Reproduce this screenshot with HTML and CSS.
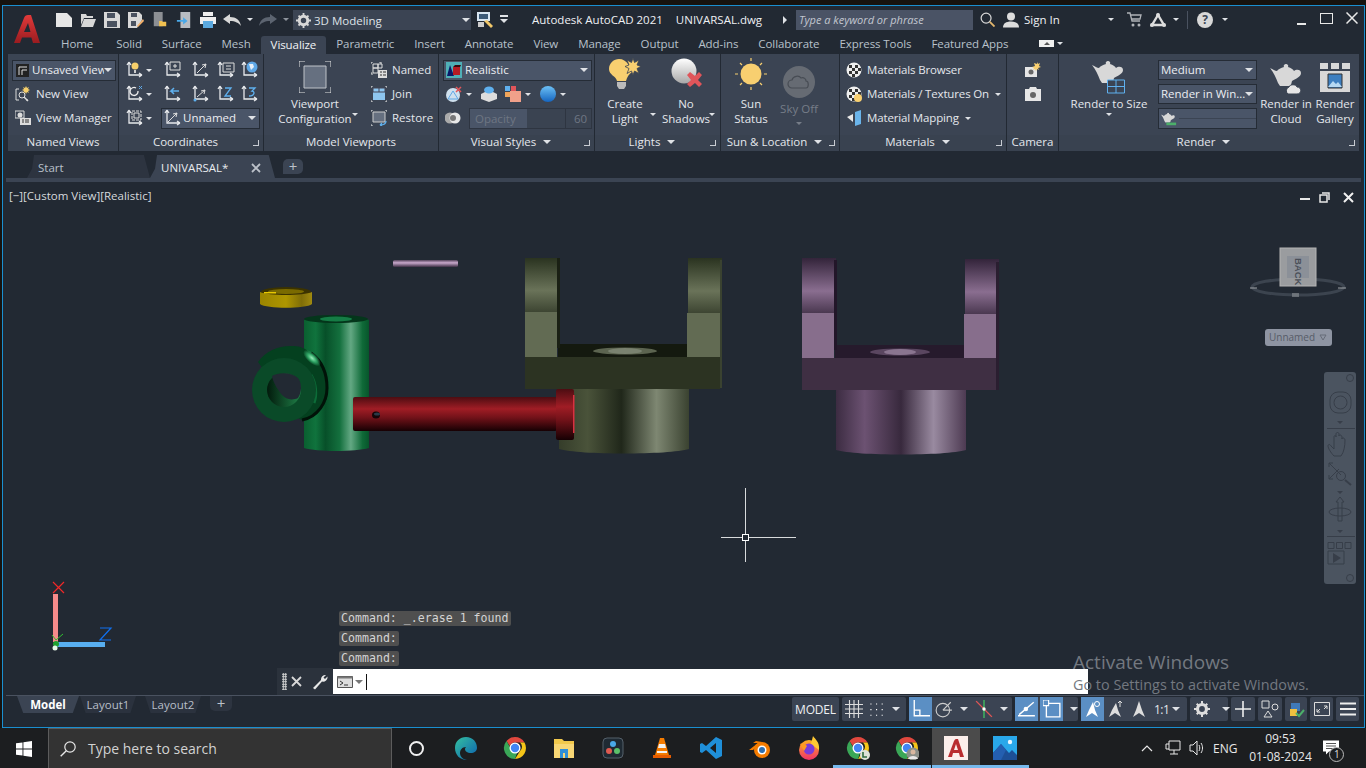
FILE: index.html
```html
<!DOCTYPE html>
<html lang="en">
<head>
<meta charset="utf-8">
<title>Autodesk AutoCAD 2021 - UNIVARSAL.dwg</title>
<link rel="stylesheet" href="styles.css">
</head>
<body>
<svg class="defs" width="0" height="0" aria-hidden="true">
  <defs>
    <symbol id="axis" viewBox="0 0 18 18"><path d="M3 1v13h13M3 1 1 4M3 1l2 3M16 14l-3-2M16 14l-3 2" fill="none" stroke="#e8eaed" stroke-width="1.3"/></symbol>
    <symbol id="mat" viewBox="0 0 16 16"><circle cx="8" cy="8" r="7.5" fill="#eee"/><path d="M3 3h3v3H3zM9 3h3v3H9zM6 6h3v3H6zM12 6h3v3h-3zM3 9h3v3H3zM9 9h3v3H9zM6 12h3v3H6z" fill="#333"/></symbol>
    <symbol id="teapot" viewBox="0 0 32 24"><path d="M0 4c3 1 5 3 7 3 1-2 4-3 7-4-1-2 1-3 2-3s3 1 2 3c3 1 5 2 6 4 2-2 7-2 7 2 0 4-6 6-9 8l-1 4-2 1H10l-2-3C6 14 4 9 0 4z" fill="#d8d8d8"/></symbol>
    <linearGradient id="gGreen"><stop offset="0" stop-color="#0a5f30"/><stop offset=".18" stop-color="#10733d"/><stop offset=".33" stop-color="#075029"/><stop offset=".55" stop-color="#14703e"/><stop offset=".72" stop-color="#63a883"/><stop offset=".9" stop-color="#0f6a38"/><stop offset="1" stop-color="#07552b"/></linearGradient>
    <linearGradient id="gRed" x2="0" y2="1"><stop offset="0" stop-color="#4d0d12"/><stop offset=".35" stop-color="#a01d25"/><stop offset=".6" stop-color="#731219"/><stop offset="1" stop-color="#160003"/></linearGradient>
    <linearGradient id="gOl"><stop offset="0" stop-color="#353d2a"/><stop offset=".22" stop-color="#4a533a"/><stop offset=".48" stop-color="#20271a"/><stop offset=".75" stop-color="#7e8772"/><stop offset="1" stop-color="#3a4230"/></linearGradient>
    <linearGradient id="gOlE" x2="0" y2="1"><stop offset="0" stop-color="#2a3320"/><stop offset=".6" stop-color="#6a7359"/><stop offset="1" stop-color="#3d4532"/></linearGradient>
    <linearGradient id="gPu"><stop offset="0" stop-color="#3c2c42"/><stop offset=".22" stop-color="#6c5272"/><stop offset=".5" stop-color="#38293d"/><stop offset=".75" stop-color="#998aa0"/><stop offset="1" stop-color="#4d3a52"/></linearGradient>
    <linearGradient id="gPuE" x2="0" y2="1"><stop offset="0" stop-color="#33243a"/><stop offset=".6" stop-color="#8a6e90"/><stop offset="1" stop-color="#4a3850"/></linearGradient>
    <linearGradient id="gPin" x2="0" y2="1"><stop offset="0" stop-color="#54425a"/><stop offset=".4" stop-color="#c8a8cc"/><stop offset="1" stop-color="#3d2e44"/></linearGradient>
    <linearGradient id="gGold"><stop offset="0" stop-color="#9a8400"/><stop offset=".5" stop-color="#ae9600"/><stop offset=".8" stop-color="#7f6d08"/><stop offset="1" stop-color="#a08a10"/></linearGradient>
    <radialGradient id="gShine"><stop offset="0" stop-color="#9aeebb"/><stop offset=".5" stop-color="#2fa565"/><stop offset="1" stop-color="#2fa565" stop-opacity="0"/></radialGradient>
    <linearGradient id="gHole"><stop offset="0" stop-color="#021a0c"/><stop offset="1" stop-color="#1f8048"/></linearGradient>
    <linearGradient id="gLogo" x2="0" y2="1"><stop offset="0" stop-color="#e23a3a"/><stop offset="1" stop-color="#9a1c20"/></linearGradient>
    <linearGradient id="gBall" x2="0" y2="1"><stop offset="0" stop-color="#fff"/><stop offset="1" stop-color="#a8a8a8"/></linearGradient>
    <linearGradient id="gSphere" x2="0" y2="1"><stop offset="0" stop-color="#6cc0f5"/><stop offset="1" stop-color="#1565c0"/></linearGradient>
    <linearGradient id="gEdge" x2="1" y2="1"><stop offset="0" stop-color="#35c1a0"/><stop offset="1" stop-color="#0b5fb0"/></linearGradient>
    <linearGradient id="gFox" x2="0" y2="1"><stop offset="0" stop-color="#ffb020"/><stop offset="1" stop-color="#f0306a"/></linearGradient>
  </defs>
</svg>
<div class="wall"></div>
<main class="window">
  <header class="head">
    <div class="logo-col">
      <svg class="logo" viewBox="0 0 26 29"><path d="M0 28 10 3q1-3 4-3h3l9 28h-7l-1.600-5.500H8L6 28zM10 17h6.500L14 8z" fill="url(#gLogo)" fill-rule="evenodd"/></svg>
    </div>
    <div class="head-main">
      <div class="titlebar">
        <span class="qb"><svg class="i16" viewBox="0 0 16 14"><path d="M0 0h11l5 5v9H0z" fill="#e6e6e6"/></svg></span>
        <span class="qb"><svg class="i16" viewBox="0 0 16 14"><path d="M1 1h5l1 2h6v2H4L1 12zM4 6h12l-3 8H1z" fill="#d8d8d8"/></svg></span>
        <span class="qb"><svg class="i16" viewBox="0 0 16 16"><path d="M0 0h13l3 3v13H0z" fill="#d8d8d8"/><path d="M3 1h8v5H3zM3 9h10v6H3z" fill="#4a5260"/></svg></span>
        <span class="qb"><svg class="i16" viewBox="0 0 16 16"><path d="M0 0h11l3 3v5l-5 8H0z" fill="#d8d8d8"/><path d="M3 1h6v4H3zM3 9h5v5H3z" fill="#4a5260"/><path d="m9 14 6-7 1 2-6 6z" fill="#f6b26b"/></svg></span>
        <span class="qb"><svg class="i16" viewBox="0 0 16 18"><path d="M1 0h10v16H1z" fill="#8c8f94"/><path d="M7 10h3l1 1h4v5H7z" fill="#f0c050"/></svg></span>
        <span class="qb"><svg class="i16" viewBox="0 0 16 18"><path d="M4 0h11v18H4z" fill="#b8bcc2"/><path d="M0 9h7V6l5 4-5 4v-3H0z" fill="#49a8e8"/></svg></span>
        <span class="qb"><svg class="i16" viewBox="0 0 16 16"><path d="M3 0h10v4H3zM0 5h16v7H0z" fill="#eee"/><path d="M3 9h10v7H3z" fill="#5ba9df"/></svg></span>
        <span class="qb"><svg class="i18" viewBox="0 0 18 12"><path d="M0 5 7 0v3c6 0 10 3 11 9-2-3-6-5-11-5v3z" fill="#d8d8d8"/></svg></span>
        <span class="car car-q"></span>
        <span class="qb"><svg class="i18" viewBox="0 0 18 12"><path d="M18 5 11 0v3C5 3 1 6 0 12c2-3 6-5 11-5v3z" fill="#5c6470"/></svg></span>
        <span class="car car-q dim"></span>
        <div class="workspace">
          <svg class="i15" viewBox="0 0 16 16"><circle cx="8" cy="8" r="4.500" fill="none" stroke="#d8d8d8" stroke-width="3.200"/><path d="M7 0h2v3H7zM7 13h2v3H7zM0 7h3v2H0zM13 7h3v2h-3zM2 3.400 3.400 2l2 2L4 5.400zM10.600 12 12 10.600l2 2-1.400 1.400zM12.600 2 14 3.400l-2 2L10.600 4zM4 10.600 5.400 12l-2 2L2 12.600z" fill="#d8d8d8"/></svg>
          <span class="ws-t">3D Modeling</span>
          <span class="car ws-c"></span>
        </div>
        <span class="qa"><svg class="i16" viewBox="0 0 16 16"><path d="M0 0h13v9H0z" fill="#d8e6f2"/><path d="M2 2h9v5H2z" fill="#3b5a78"/><path d="M1 10h6v5H1z" fill="#ccc"/><path d="m7 9 3-1 6 6-2 2z" fill="#f2c86a"/></svg></span>
        <span class="car ws-bar"></span>
        <div class="doc-title"><span>Autodesk AutoCAD 2021</span><span class="dwg">UNIVARSAL.dwg</span></div>
        <span class="tri-r"></span>
        <div class="search">Type a keyword or phrase</div>
        <svg class="i15 mag" viewBox="0 0 16 16"><circle cx="6.500" cy="6.500" r="5.300" fill="none" stroke="#d8d8d8" stroke-width="1.300"/><path d="m10.500 10.500 5 5" stroke="#e3b76d" stroke-width="2"/></svg>
        <svg class="i16 person" viewBox="0 0 16 15"><circle cx="8" cy="4" r="4" fill="#ddd"/><path d="M0 15c0-4 3-6 8-6s8 2 8 6z" fill="#ddd"/></svg>
        <span class="signin">Sign In</span>
        <span class="car car-si"></span>
        <svg class="i15 cart" viewBox="0 0 15 15"><path d="M0 1h3l2 8h8M4 3h10l-1 4H5" fill="none" stroke="#b0b3b8" stroke-width="1.300"/><circle cx="6" cy="13" r="1.500" fill="#b0b3b8"/><circle cx="12" cy="13" r="1.500" fill="#b0b3b8"/></svg>
        <svg class="i16 a360" viewBox="0 0 16 14"><path d="M8 2 2 12h12z" fill="none" stroke="#ddd" stroke-width="2.400"/><circle cx="8" cy="2" r="2" fill="#ddd"/><circle cx="2" cy="12" r="2" fill="#ddd"/><circle cx="14" cy="12" r="2" fill="#ddd"/></svg>
        <span class="car car-a"></span>
        <span class="sep"></span>
        <span class="help">?</span>
        <span class="car car-h"></span>
        <span class="wmin"></span>
        <span class="wmax"></span>
        <svg class="wclose" viewBox="0 0 12 12"><path d="m.5.500 11 11M11.500.500l-11 11" stroke="#e8e8e8" stroke-width="1.500"/></svg>
      </div>
      <nav class="tabs">
        <span class="tab tab-home">Home</span><span class="tab">Solid</span><span class="tab">Surface</span><span class="tab">Mesh</span><span class="tab active">Visualize</span><span class="tab">Parametric</span><span class="tab">Insert</span><span class="tab">Annotate</span><span class="tab">View</span><span class="tab">Manage</span><span class="tab">Output</span><span class="tab">Add-ins</span><span class="tab">Collaborate</span><span class="tab">Express Tools</span><span class="tab tab-last">Featured Apps</span>
        <span class="min-tog"><span class="tri-u"></span></span><span class="car car-t"></span>
      </nav>
    </div>
  </header>

  <section class="ribbon">
    <div class="panel p-named">
      <div class="pb col pad-l4">
        <div class="row"><div class="dd dd-unsaved"><svg class="i13" viewBox="0 0 13 13"><path d="M0 0h13v13H0z" fill="#222"/><path d="M3 11V3h8M6 11V6h5" fill="none" stroke="#ddd"/></svg><span class="clip">Unsaved View</span><span class="car car-abs"></span></div></div>
        <div class="row li"><svg class="i16" viewBox="0 0 16 16"><path d="M1 3v11h3M1 3h3M13 14h-2" fill="none" stroke="#ddd"/><circle cx="7" cy="9" r="3" fill="none" stroke="#ddd"/><path d="m9 11 4 4" stroke="#ddd" stroke-width="1.500"/><path d="m11 0 1 2 2-1-1 2 2 1-2 1 1 2-2-1-1 2-1-2-2 1 1-2-2-1 2-1-1-2 2 1z" fill="#f6cf6b"/></svg><span>New View</span></div>
        <div class="row li"><svg class="i16" viewBox="0 0 16 16"><path d="M0 1h9v7H0z" fill="none" stroke="#ddd"/><circle cx="5" cy="5" r="2.500" fill="#ddd"/><path d="M5 8h11v7H5z" fill="#ddd"/><path d="M7 10h2M10 10h4M7 12h2M10 12h4" stroke="#333"/></svg><span>View Manager</span></div>
      </div>
      <div class="pt">Named Views</div>
    </div>

    <div class="panel p-coord">
      <div class="pb col coord">
        <div class="row crow">
          <span class="cb"><svg class="i18" viewBox="0 0 18 18"><use href="#axis"/><circle cx="9" cy="5" r="3.500" fill="#f6cf6b"/><path d="M8 9h2v3H8z" fill="#ccc"/></svg></span><span class="car cc"></span>
          <svg class="i18 c1" viewBox="0 0 18 18"><use href="#axis"/><path d="M6 1h10v8H6z" fill="#3b4453" stroke="#ddd"/><path d="M9 5h4M11 3v4" stroke="#ddd"/></svg>
          <svg class="i18 c2" viewBox="0 0 18 18"><use href="#axis"/><path d="m5 12 9-9M14 3l-4 1M14 3l-1 4" stroke="#ddd" fill="none"/></svg>
          <svg class="i18 c3" viewBox="0 0 18 18"><use href="#axis"/><path d="M6 2h11v9H6z" fill="#3b4453" stroke="#ddd"/><path d="M9 5h5M9 8h5" stroke="#ddd"/></svg>
          <svg class="i18 c4" viewBox="0 0 18 18"><use href="#axis"/><circle cx="11" cy="6" r="5.500" fill="#5fa8e6"/><path d="M8 3h4l1 3-3 3z" fill="#e8f0f8"/></svg>
        </div>
        <div class="row crow">
          <span class="cb"><svg class="i18" viewBox="0 0 18 18"><use href="#axis"/><path d="M12 6a4 4 0 1 1-2-3" fill="none" stroke="#eee" stroke-width="1.300"/><path d="m13 1 3 3M16 1l-3 3" stroke="#5fa8e6"/></svg></span><span class="car cc"></span>
          <svg class="i18 c1" viewBox="0 0 18 18"><use href="#axis"/><path d="M15 6H7l3-3M7 6l3 3" fill="none" stroke="#5fb0ee" stroke-width="1.500"/></svg>
          <svg class="i18 c2" viewBox="0 0 18 18"><use href="#axis"/><path d="m5 12 8-7M13 5l-4 1M13 5l-1 4" stroke="#ddd" fill="none"/><circle cx="3" cy="15" r="1.500" fill="#5fb0ee"/></svg>
          <svg class="i18 c3" viewBox="0 0 18 18"><use href="#axis"/><path d="M8 3h6L8 11h6" fill="none" stroke="#5fb0ee" stroke-width="1.300"/></svg>
          <svg class="i18 c4" viewBox="0 0 18 18"><use href="#axis"/><path d="M8 3h6l-3 3c3 0 3 5-3 5" fill="none" stroke="#5fb0ee" stroke-width="1.300"/></svg>
        </div>
        <div class="row crow">
          <span class="cb"><svg class="i18" viewBox="0 0 18 18"><use href="#axis"/><path d="M6 2h9v9H6z" fill="none" stroke="#ddd" stroke-dasharray="3 1"/><path d="M8 4h5v5H8z" fill="none" stroke="#ddd"/></svg></span><span class="car cc"></span>
          <div class="dd dd-unnamed"><svg class="i18" viewBox="0 0 18 18"><use href="#axis"/><path d="m4 13 9-9M13 4l-4 1M13 4l-1 4" stroke="#ddd" fill="none"/></svg><span>Unnamed</span><span class="car car-abs"></span></div>
        </div>
      </div>
      <div class="pt">Coordinates<span class="corner"></span></div>
    </div>

    <div class="panel p-vp">
      <div class="pb">
        <div class="big w102">
          <div class="bigi"><svg class="vp-ic" viewBox="0 0 32 32"><path d="M5 5h22v22H5z" fill="#667080" stroke="#bfc3c9"/><path d="M0 6V0h6M26 0h6v6M32 26v6h-6M6 32H0v-6" fill="none" stroke="#e6e6e6"/></svg></div>
          <div class="bigt">Viewport<br>Configuration<span class="car car-big cfg"></span></div>
        </div>
        <div class="col pad-l5">
          <div class="row li"><svg class="i16" viewBox="0 0 16 16"><path d="M0 2V0h2M8 0h2v2M0 10v2h2" fill="none" stroke="#ddd"/><path d="M2 2h5v4H2zM7 2h4v4H7zM2 6h5v5H2z" fill="none" stroke="#ddd"/><path d="M7 8h9v8H7z" fill="#ddd"/><path d="M9 10h2M12 10h3M9 13h2M12 13h3" stroke="#333"/></svg><span>Named</span></div>
          <div class="row li"><svg class="i16" viewBox="0 0 16 16"><path d="M0 2V0h2M14 0h2v2M16 14v2h-2M2 16H0v-2" fill="none" stroke="#ddd"/><path d="M2 2h12v12H2z" fill="#8ec6ef"/><path d="M2 2h12v4H2zM8 2v4" stroke="#445" fill="none"/></svg><span>Join</span></div>
          <div class="row li"><svg class="i16" viewBox="0 0 16 16"><path d="M0 2V0h2M14 0h2v2M2 16H0v-2" fill="none" stroke="#ddd"/><path d="M2 2h12v10H2z" fill="#667080" stroke="#ccc"/><path d="M15 11c0 3-3 4-6 4m0 0 2-2m-2 2 2 1" fill="none" stroke="#5fb0ee" stroke-width="1.300"/></svg><span>Restore</span></div>
        </div>
      </div>
      <div class="pt">Model Viewports</div>
    </div>

    <div class="panel p-vs">
      <div class="pb col vs">
        <div class="row"><div class="dd dd-real"><svg class="i16 real-ic" viewBox="0 0 16 16"><path d="M0 0h16v16H0z" fill="#4fb0b8"/><path d="M4 3 1 14h7z" fill="#0a1a6a"/><path d="M7 5h7v8H7z" fill="#b51c24"/><path d="M7 5l2-2h6l-1 2z" fill="#3a0a10"/></svg><span>Realistic</span><span class="car car-abs"></span></div></div>
        <div class="row vs2">
          <svg class="i16" viewBox="0 0 16 16"><circle cx="7" cy="9" r="7" fill="#cfe0ee"/><path d="m7 5 5 8H2z" fill="none" stroke="#5fa8e6"/><path d="m10 1 5 5M15 1l-5 5" stroke="#e0555a" stroke-width="1.500"/></svg><span class="car cv1"></span>
          <svg class="i16 vs-b" viewBox="0 0 16 16"><path d="M0 8l8-4 8 4v5l-8 3-8-3z" fill="#ddd"/><ellipse cx="8" cy="4" rx="5" ry="3.500" fill="#5fb0ee"/></svg>
          <svg class="i16 vs-c" viewBox="0 0 16 16"><path d="M0 0h5v5H0z" fill="#5fb0ee"/><path d="M6 0h5v5H6z" fill="#e0555a"/><path d="M0 6h5v5H0z" fill="#f2a65a"/><path d="M5 5h11v11H5z" fill="#f0a08a"/></svg><span class="car cv1"></span>
          <svg class="i16 vs-d" viewBox="0 0 16 16"><circle cx="8" cy="8" r="8" fill="url(#gSphere)"/></svg><span class="car cv1"></span>
        </div>
        <div class="row vs3">
          <svg class="i16" viewBox="0 0 16 12"><circle cx="5" cy="6" r="5.500" fill="#aaa"/><circle cx="10" cy="6" r="5.500" fill="#e8e8e8"/><circle cx="8" cy="6" r="3" fill="#777"/></svg>
          <div class="slider"><span class="op">Opacity</span><span class="op-n">60</span></div>
        </div>
      </div>
      <div class="pt">Visual Styles<span class="car car-pt"></span><span class="corner"></span></div>
    </div>

    <div class="panel p-lights">
      <div class="pb">
        <div class="big w60">
          <div class="bigi"><svg class="i32" viewBox="0 0 32 32"><path d="M0 11C0 5 5 1 10 1c4 0 7 2 9 5l4 8c-3 2-5 5-6 9H8C7 18 0 17 0 11z" fill="#f8cf70"/><path d="M8 24h9v4l-2 3h-5l-2-3z" fill="#bbb"/><path d="m24 0 1.500 4.500L30 2l-2 5 4 1.500-4 2 2 5-4.500-2.500-1.500 4-1.500-4-4.500 2.500 2-5-4-2 4-1.500-2-5 4.500 2.500z" fill="#f8cf70" stroke="#3b4453" stroke-width=".8"/></svg></div>
          <div class="bigt">Create<br>Light<span class="car car-big cl"></span></div>
        </div>
        <div class="big w60 ml1">
          <div class="bigi"><svg class="i32" viewBox="0 0 32 32"><circle cx="14" cy="13" r="12.500" fill="url(#gBall)"/><path d="m17 17 3-3 5 4 4-4 3 3-4 5 4 4-3 3-4-4-5 4-3-3 4-4z" fill="#e0555a"/></svg></div>
          <div class="bigt">No<br>Shadows<span class="car car-big ns"></span></div>
        </div>
      </div>
      <div class="pt">Lights<span class="car car-pt"></span><span class="corner"></span></div>
    </div>

    <div class="panel p-sun">
      <div class="pb">
        <div class="big w60">
          <div class="bigi"><svg class="i32" viewBox="0 0 32 32"><circle cx="16" cy="16" r="10.500" fill="#f8cf70"/><path d="M16 0v3M16 29v3M0 16h3M29 16h3M5 5l2 2M25 25l2 2M27 5l-2 2M7 25l-2 2" stroke="#f8cf70" stroke-width="1.200"/></svg></div>
          <div class="bigt">Sun<br>Status</div>
        </div>
        <div class="big w36">
          <div class="bigi sky"><svg class="i32" viewBox="0 0 32 32"><circle cx="16" cy="16" r="16" fill="#666b73"/><path d="M9 22a4 4 0 0 1 0-8c1-4 7-5 9-2 3-1 5 1 5 3 3 0 3 7 0 7z" fill="none" stroke="#474c54" stroke-width="1.200"/></svg></div>
          <div class="bigt dimt sky-t">Sky Off<span class="car sky-c"></span></div>
        </div>
      </div>
      <div class="pt">Sun &amp; Location<span class="car car-pt"></span><span class="corner"></span></div>
    </div>

    <div class="panel p-mat">
      <div class="pb col pad-l6">
        <div class="row li"><svg class="i16" viewBox="0 0 16 16"><use href="#mat"/></svg><span>Materials Browser</span></div>
        <div class="row li"><svg class="i16" viewBox="0 0 16 16"><use href="#mat"/><circle cx="12" cy="12" r="4" fill="#f8cf70"/></svg><span>Materials / Textures On</span><span class="car car-in"></span></div>
        <div class="row li"><svg class="i16" viewBox="0 0 16 16"><path d="M1 7l6-3v8z" fill="#e8e8e8"/><path d="M9 2l6-2v14l-6 2z" fill="#6ab4ea"/></svg><span>Material Mapping</span><span class="car car-in"></span></div>
      </div>
      <div class="pt">Materials<span class="car car-pt"></span><span class="corner"></span></div>
    </div>

    <div class="panel p-cam">
      <div class="pb col cam">
        <div class="row"><svg class="i16" viewBox="0 0 16 16"><path d="M0 5h12v10H0z" fill="#e6e6e6"/><circle cx="6" cy="10" r="2.500" fill="#666"/><path d="m12 0 1 2 2-1-1 3 2 1-3 1 1 2-2-1-1 2-1-2-2 1 1-2-2-1 3-1-1-3 3 1z" fill="#f8cf70"/></svg></div>
        <div class="row"><svg class="i16" viewBox="0 0 16 14"><path d="M0 2h4l1-2h6l1 2h4v12H0z" fill="#e6e6e6"/><circle cx="8" cy="8" r="3" fill="#666"/></svg></div>
      </div>
      <div class="pt">Camera</div>
    </div>

    <div class="panel p-render">
      <div class="pb">
        <div class="big w100">
          <div class="bigi tea"><svg class="tea-ic" viewBox="0 0 34 33"><use href="#teapot" width="32" height="24"/><path d="M15.500 19h17v13h-17z" fill="#3b4453" stroke="#5fb0ee"/><path d="M24 19v13M15.500 25.500h17" stroke="#5fb0ee"/></svg></div>
          <div class="bigt">Render to Size<span class="car rs-c"></span></div>
        </div>
        <div class="col rcol">
          <div class="dd dd-r"><span>Medium</span><span class="car car-abs"></span></div>
          <div class="dd dd-r"><span>Render in Win...</span><span class="car car-abs"></span></div>
          <div class="dd dd-prog"><svg class="i16" viewBox="0 0 18 14"><use href="#teapot" width="16" height="12"/><path d="M6 11h11v3H6z" fill="#4caf6a"/></svg><span class="prog"></span></div>
        </div>
        <div class="big w58">
          <div class="bigi tea2"><svg class="i32" viewBox="0 0 32 30"><use href="#teapot" width="32" height="24"/><path d="M18 30a4 4 0 0 1 1-7c1-3 7-3 8 0 5 0 5 7 0 7z" fill="#e6e6e6" stroke="#3b4453"/></svg></div>
          <div class="bigt">Render in<br>Cloud</div>
        </div>
        <div class="big w40">
          <div class="bigi tea2"><svg class="i30" viewBox="0 0 30 29"><path d="M0 0h8v6H0zM11 0h8v6h-8zM22 0h8v6h-8zM0 8h30v21H0z" fill="#d8d8d8"/><path d="M8 11h14v14H8z" fill="#3d7fc0" stroke="#333"/><path d="m8 24 5-6 3 3 2-2 4 5z" fill="#b5d8f2"/></svg></div>
          <div class="bigt">Render<br>Gallery</div>
        </div>
      </div>
      <div class="pt">Render<span class="car car-pt"></span><span class="corner"></span></div>
    </div>
  </section>

  <div class="filetabs">
    <div class="ft ft-start">Start</div>
    <div class="ft ft-doc"><span>UNIVARSAL*</span><svg class="ft-x" viewBox="0 0 10 10"><path d="m1 1 8 8M9 1 1 9" stroke="#bcc1c9" stroke-width="1.800"/></svg></div>
    <div class="ft-plus">+</div>
  </div>
  <div class="divider"></div>

  <section class="viewport">
    <svg class="scene" viewBox="3 182 1361 513" aria-hidden="true">
      <!-- pin and ring -->
      <rect x="393" y="260" width="65" height="7" rx="1.500" fill="url(#gPin)"/>
      <ellipse cx="286" cy="292" rx="25" ry="5" fill="#3c3300"/>
      <ellipse cx="286" cy="291.500" rx="18" ry="2.500" fill="#7a6a00"/>
      <path d="M260 292c8 4 44 4 52 0v12c-6 5-46 5-52 0z" fill="url(#gGold)"/>
      <path d="M264 292h12v1.500h-12z" fill="#e8c800"/>
      <!-- olive yoke -->
      <path d="M559 389h130v60c-20 6-110 6-130 0z" fill="url(#gOl)"/>
      <rect x="558" y="344" width="130" height="14" fill="#14190f"/>
      <ellipse cx="625" cy="351" rx="32" ry="3.500" fill="#5c6450"/>
      <ellipse cx="625" cy="351" rx="17" ry="3" fill="#7a8270"/>
      <rect x="525" y="258" width="34" height="54" fill="url(#gOlE)"/>
      <rect x="525" y="312" width="32" height="45" fill="#626b53"/>
      <rect x="557" y="258" width="3" height="90" fill="#1a2014"/>
      <rect x="688" y="258" width="34" height="55" fill="url(#gOlE)"/>
      <rect x="687" y="313" width="33" height="44" fill="#626b53"/>
      <rect x="525" y="357" width="195" height="32" fill="#2c3322"/>
      <rect x="720" y="260" width="2" height="128" fill="#3a4230"/>
      <!-- green part -->
      <path d="M304 320c12-5 53-5 65 0v128c-14 4-52 4-65 0z" fill="url(#gGreen)"/>
      <ellipse cx="336" cy="319" rx="32" ry="4" fill="#04361b"/>
      <ellipse cx="336" cy="319" rx="16" ry="2.500" fill="#157c45"/>
      <path d="M258 362c8-12 22-17 36-16 6 0 12 3 15 6l4 2c10 7 16 20 15 36 0 14-10 28-26 30l-4-2z" fill="#04401f"/>
      <path d="M311 353c11 8 16 21 16 35 0 14-9 29-25 32" fill="none" stroke="#011208" stroke-width="3"/>
      <path d="M311 375c5 8 6 20 3 28" fill="none" stroke="#0c6c38" stroke-width="3"/>
      <ellipse cx="312" cy="358" rx="11" ry="5" transform="rotate(42 312 358)" fill="url(#gShine)"/>
      <circle cx="284" cy="390" r="32" fill="#0a4a28"/>
      <circle cx="284" cy="390" r="17" fill="url(#gHole)"/>
      <path d="M272 376c7-4 20-4 26 2 4 5 4 14 0 20-7 3-12 1-16-3-5-6-9-13-10-19z" fill="#222933"/>
      <!-- red shaft -->
      <rect x="353" y="397" width="204" height="34" rx="2" fill="url(#gRed)"/>
      <rect x="556" y="389" width="18" height="51" rx="2" fill="url(#gRed)"/>
      <path d="M573 395h1.500v38H573z" fill="#d93040"/>
      <ellipse cx="376" cy="415" rx="4" ry="3.500" fill="#140508"/>
      <ellipse cx="377" cy="414" rx="3" ry="1.500" fill="#2a3a48"/>
      <!-- purple yoke -->
      <path d="M836 390h130v60c-20 6-110 6-130 0z" fill="url(#gPu)"/>
      <rect x="835" y="345" width="130" height="14" fill="#261a2c"/>
      <ellipse cx="900" cy="352" rx="30" ry="3.500" fill="#5a4660"/>
      <ellipse cx="900" cy="352" rx="16" ry="3" fill="#8a7590"/>
      <rect x="802" y="258" width="34" height="55" fill="url(#gPuE)"/>
      <rect x="802" y="313" width="32" height="45" fill="#876e8c"/>
      <rect x="834" y="260" width="3" height="90" fill="#221629"/>
      <rect x="965" y="259" width="34" height="55" fill="url(#gPuE)"/>
      <rect x="964" y="314" width="33" height="44" fill="#876e8c"/>
      <rect x="802" y="358" width="194" height="32" fill="#3f2f43"/>
      <rect x="996" y="262" width="3" height="128" fill="#2a1e30"/>
      <!-- crosshair -->
      <path d="M721 537.500h21M749 537.500h47M745.500 488v46M745.500 541v21" stroke="#d8dadc" stroke-width="1"/>
      <rect x="742.500" y="534.500" width="6" height="6" fill="none" stroke="#fff"/>
      <!-- ucs -->
      <path d="m53 582 11 11M64 582l-11 11" stroke="#f02828" stroke-width="1.200"/>
      <rect x="53" y="594" width="5" height="48" fill="#f58b8b"/>
      <rect x="55" y="642" width="50" height="5" fill="#58aef0"/>
      <path d="M100 628h11l-11 12h11" fill="none" stroke="#1070f0" stroke-width="1.200"/>
      <path d="m52 635 4 5 7-6" fill="none" stroke="#30c030"/>
      <circle cx="56" cy="644" r="3" fill="#1fa030"/>
      <circle cx="55" cy="648" r="2.500" fill="#e8f8e8"/>
      <!-- viewcube -->
      <ellipse cx="1298" cy="287" rx="46" ry="8" fill="none" stroke="#3c444f" stroke-width="3"/>
      <path d="M1250 288h7M1338 288h8M1292 296h7M1292 294h7" stroke="#a0a4a8" stroke-width="1.200"/>
      <rect x="1280" y="248" width="36" height="38" fill="#9a9c9f" stroke="#b4b4b4"/>
      <rect x="1287" y="256" width="22" height="22" fill="#8b9098"/>
      <text class="cube-t" transform="translate(1295 258) rotate(90)">BACK</text>
      <rect x="1265" y="329" width="67" height="17" rx="3" fill="#8e94a2"/>
      <text class="un-t" x="1269" y="341">Unnamed</text>
      <path d="m1320 335 6 0-3 5z" fill="none" stroke="#666c78"/>
      <!-- navbar -->
      <rect x="1324" y="372" width="32" height="212" rx="3" fill="#4b5460"/>
      <g fill="none" stroke="#373e49">
        <circle cx="1350" cy="378" r="3.500"/>
        <circle cx="1350" cy="578" r="3.500"/>
        <rect x="1330" y="392" width="21" height="21" rx="8"/>
        <circle cx="1340.500" cy="402.500" r="6.500"/>
        <path d="M1327 428.500h28M1327 536.500h28"/>
        <path d="M1334 456c-3-3-6-8-6-10s2-2 3 0l3 3v-12c0-2 2-2 2 0v-3c0-2 3-2 3 0v2c0-2 3-1 3 1v2c0-2 3-1 3 1 0 6-1 12-4 16z"/>
        <path d="m1329 463 12 12M1329 479l10-10M1329 463h4M1329 463v4M1329 479h4M1329 479v-4"/>
        <circle cx="1341" cy="476" r="4.500"/><path d="m1345 480 6 5" stroke-width="2"/>
        <ellipse cx="1340" cy="512" rx="11" ry="4"/><path d="M1338 521v-19h-2l4-5 4 5h-2v19z"/>
        <path d="M1328 542.500h6v6h-6zM1336.500 542.500h6v6h-6zM1345 542.500h6v6h-6zM1328 551h16v13h-16z"/>
      </g>
      <path d="m1333 553 8 5-8 5zM1337 421h6l-3 3zM1337 491h6l-3 3zM1337 530h6l-3 3z" fill="#373e49"/>
    </svg>

    <div class="vp-label">[&#8722;][Custom View][Realistic]</div>
    <div class="vp-ctl">
      <span class="vc-min"></span>
      <svg class="vc-res" viewBox="0 0 11 11"><path d="M3 1h7v7M1 3h7v7H1z" fill="none" stroke="#e8e8e8" stroke-width="1.500"/></svg>
      <svg class="vc-x" viewBox="0 0 11 11"><path d="m1 1 9 9M10 1l-9 9" stroke="#f0f0f0" stroke-width="2"/></svg>
    </div>

    <div class="hist">
      <div><span>Command: _.erase 1 found</span></div>
      <div><span>Command:</span></div>
      <div><span>Command:</span></div>
    </div>
    <div class="cmd">
      <div class="cmd-tools">
        <span class="grip"></span>
        <svg class="i11" viewBox="0 0 11 11"><path d="m1 1 9 9M10 1l-9 9" stroke="#d8d8d8" stroke-width="1.800"/></svg>
        <svg class="i16 wrench" viewBox="0 0 16 16"><path d="M1 14 9 6a4.500 4.500 0 0 1 5-5l-2.500 2.500 1.500 1.500L15.500 2.500A4.500 4.500 0 0 1 10 7.500L3 15.500z" fill="#e8e8e8"/></svg>
      </div>
      <div class="cmd-input">
        <svg class="cmd-ic" viewBox="0 0 16 12"><path d="M.5.500h15v11H.5z" fill="#ddd" stroke="#555"/><path d="M.5.500h15v2H.5z" fill="#777"/><path d="m3 5 3 2-3 2M7 9h4" fill="none" stroke="#333"/></svg>
        <span class="car cmd-car"></span>
        <span class="cursor"></span>
      </div>
    </div>
    <div class="activate">
      <div class="act1">Activate Windows</div>
      <div class="act2">Go to Settings to activate Windows.</div>
    </div>
  </section>

  <footer class="bottom">
    <div class="ltabs">
      <span class="lt lt-on">Model</span><span class="lt">Layout1</span><span class="lt">Layout2</span><span class="lt-plus">+</span>
    </div>
    <div class="status">
      <div class="sg sg-model">MODEL</div>
      <div class="sg sg-2">
        <svg class="i18" viewBox="0 0 16 16"><path d="M4 0v16M8 0v16M12 0v16M0 4h16M0 8h16M0 12h16" stroke="#ddd"/></svg>
        <svg class="i18" viewBox="0 0 16 16"><path d="M3 3h1v1H3zM8 3h1v1H8zM13 3h1v1h-1zM3 8h1v1H3zM8 8h1v1H8zM13 8h1v1h-1zM3 13h1v1H3zM8 13h1v1H8zM13 13h1v1h-1z" fill="#fff"/></svg>
        <span class="car sc"></span>
      </div>
      <div class="sg sg-3">
        <span class="sb on"><svg class="i18" viewBox="0 0 16 16"><path d="M2 0v14h14M2 9h5v5" fill="none" stroke="#fff" stroke-width="1.200"/></svg></span>
        <span class="sb"><svg class="i18" viewBox="0 0 16 16"><circle cx="7" cy="9" r="6" fill="none" stroke="#ccc"/><path d="M7 9 14 2M7 9h8" stroke="#ccc"/></svg></span><span class="car sc"></span>
        <span class="sb sb-p"><svg class="i18" viewBox="0 0 16 16"><path d="M1 1l14 14" stroke="#e05555" stroke-width="1.200"/><path d="M8 0v16" stroke="#40c060" stroke-width="1.200"/><circle cx="8" cy="8" r="1.500" fill="#fff"/></svg></span><span class="car sc"></span>
      </div>
      <div class="sg sg-4">
        <span class="sb on"><svg class="i18" viewBox="0 0 16 16"><path d="M0 14h15M1 13 14 2" stroke="#fff" stroke-width="1.200"/><circle cx="7" cy="8" r="2" fill="#fff"/></svg></span>
        <span class="sb on"><svg class="i18" viewBox="0 0 16 16"><path d="M3 3h12v12H3z" fill="none" stroke="#fff" stroke-width="1.200"/><path d="M0 0h5v5H0z" fill="#5b8fc4" stroke="#fff"/></svg></span>
        <span class="car sc"></span>
      </div>
      <div class="sg sg-5">
        <span class="sb on"><svg class="i18" viewBox="0 0 16 18"><path d="M8 2 4 10l-3 7 6-4 6 4-3-7z" fill="#fff"/><circle cx="12" cy="4" r="2.500" fill="none" stroke="#fff"/></svg></span>
        <span class="sb"><svg class="i18" viewBox="0 0 16 18"><path d="M8 3 4 10l-3 7 6-4 6 4-3-7z" fill="#ddd"/><path d="M12 1v6M10 3l2-2 2 2" fill="none" stroke="#ddd"/></svg></span>
        <span class="sb"><svg class="i18" viewBox="0 0 16 18"><path d="M8 1 5 10l-3 7 6-4 6 4-3-7z" fill="#ddd"/></svg></span>
        <span class="scale">1:1</span><span class="car sc-n"></span>
      </div>
      <div class="sg sg-6">
        <svg class="i16" viewBox="0 0 16 16"><circle cx="8" cy="8" r="4.500" fill="none" stroke="#ddd" stroke-width="3.200"/><path d="M7 0h2v3H7zM7 13h2v3H7zM0 7h3v2H0zM13 7h3v2h-3zM2 3.400 3.400 2l2 2L4 5.400zM10.600 12 12 10.600l2 2-1.400 1.400zM12.600 2 14 3.400l-2 2L10.600 4zM4 10.600 5.400 12l-2 2L2 12.600z" fill="#ddd"/></svg>
        <span class="car sc"></span>
      </div>
      <div class="sg sg-s"><svg class="i16" viewBox="0 0 16 16"><path d="M8 0v16M0 8h16" stroke="#eee" stroke-width="1.600"/></svg></div>
      <div class="sg sg-s"><svg class="i18" viewBox="0 0 18 18"><path d="M1 1h7v7H1z" fill="none" stroke="#ddd"/><circle cx="14" cy="7" r="3" fill="none" stroke="#ddd"/><path d="m7 11 4 6H3z" fill="none" stroke="#ddd"/></svg></div>
      <div class="sg sg-t"><svg class="i18" viewBox="0 0 18 18"><path d="M4 3h9v8H4z" fill="#3f79b8"/><path d="M3 9h7v7H3z" fill="#f0c040"/><path d="m9 13 3 3 5-6" fill="none" stroke="#4caf6a" stroke-width="2"/></svg></div>
      <div class="sg sg-u"><svg class="i16" viewBox="0 0 16 14"><path d="M.5.500h15v13H.5z" fill="none" stroke="#ddd"/><path d="m3 10 3-3M3 10h3M3 10V7M13 4l-3 3M13 4h-3M13 4v3" stroke="#ddd" fill="none"/></svg></div>
      <div class="sg sg-u"><svg class="i16" viewBox="0 0 16 14"><path d="M0 1.500h16M0 7h16M0 12.500h16" stroke="#eee" stroke-width="2"/></svg></div>
    </div>
  </footer>
</main>

<footer class="taskbar">
  <svg class="start" viewBox="0 0 16 16"><path d="M0 2.300 6.500 1.400v6.100H0zM7.400 1.300 16 0v7.500H7.400zM0 8.400h6.500v6.200L0 13.700zM7.400 8.400H16V16l-8.600-1.300z" fill="#fff"/></svg>
  <div class="tsearch">
    <svg class="i16" viewBox="0 0 16 16"><circle cx="10" cy="6" r="5.200" fill="none" stroke="#e8e8e8" stroke-width="1.200"/><path d="M6.300 9.700.7 15.300" stroke="#e8e8e8" stroke-width="1.400"/></svg>
    <span>Type here to search</span>
  </div>
  <div class="tb cortana"><span class="ring"></span></div>
  <div class="tb"><svg class="i24" viewBox="0 0 24 24"><path d="M1 12C1 5 6 1 12 1c7 0 11 5 11 11 0 3-3 5-6 5-4 0-6-2-6-4 0-1 1-2 1-2-4 0-6 3-6 6 0 3 2 6 7 7C6 24 1 19 1 12z" fill="url(#gEdge)"/></svg></div>
  <div class="tb"><svg class="i24" viewBox="0 0 24 24"><path d="M12 1a11 11 0 0 1 9.500 5.500H12A5.500 5.500 0 0 0 6.800 10L3.500 5A11 11 0 0 1 12 1z" fill="#e0483e"/><path d="M21.500 6.500A11 11 0 0 1 12 23l5-8a5.500 5.500 0 0 0 0-8.500z" fill="#f5c518"/><path d="M12 23A11 11 0 0 1 3.500 5L8 13a5.500 5.500 0 0 0 6 4z" fill="#3aa757"/><circle cx="12" cy="12" r="5.500" fill="#fff"/><circle cx="12" cy="12" r="4.200" fill="#4285f4"/></svg></div>
  <div class="tb"><svg class="i24" viewBox="0 0 24 24"><path d="M2 3h8l2 2h10v17H2z" fill="#f2c94c"/><path d="M2 8h20v14H2z" fill="#f8d775"/><path d="M8 13h8v9h-3v-5h-2v5H8z" fill="#2f8fd8"/></svg></div>
  <div class="tb"><svg class="i24" viewBox="0 0 24 24"><rect x="2" y="2" width="20" height="20" rx="4" fill="#1f2a33" stroke="#55606a"/><circle cx="12" cy="8" r="3" fill="#4aa8e8"/><circle cx="8" cy="15" r="3" fill="#e05a50"/><circle cx="16" cy="15" r="3" fill="#5bc06a"/></svg></div>
  <div class="tb"><svg class="i24" viewBox="0 0 24 24"><path d="M10 2h4l5 17H5z" fill="#f57c00"/><path d="M9 8h6l1 4H8zM7 15h10v2H7z" fill="#f2f2f2"/><path d="M3 19h18v3H3z" fill="#e65c00"/></svg></div>
  <div class="tb"><svg class="i24" viewBox="0 0 24 24"><path d="M17 1 23 4v16l-6 3L7 14l-4 3-2-1V8l2-1 4 3zM17 7l-6 5 6 5z" fill="#1f8fd8" fill-rule="evenodd"/></svg></div>
  <div class="tb"><svg class="i24" viewBox="0 0 24 24"><circle cx="14" cy="14" r="8" fill="#f57c00"/><circle cx="14" cy="14" r="4.500" fill="#fff"/><circle cx="14" cy="14" r="3" fill="#2f6fb0"/><path d="M1 14 10 7H5l3-2 6 1-9 8z" fill="#f57c00"/></svg></div>
  <div class="tb"><svg class="i24" viewBox="0 0 24 24"><circle cx="12" cy="14" r="10" fill="url(#gFox)"/><path d="M16 0c2 3 7 6 6 14l-8-6z" fill="#ffc933"/><circle cx="12" cy="13" r="5.500" fill="#7a3bd8"/><path d="M3 8c3-1 5 0 7 2l-3 5z" fill="#ff9a20"/></svg></div>
  <div class="tb"><svg class="i24" viewBox="0 0 24 24"><path d="M12 1a11 11 0 0 1 9.500 5.500H12A5.500 5.500 0 0 0 6.800 10L3.500 5A11 11 0 0 1 12 1z" fill="#e0483e"/><path d="M21.500 6.500A11 11 0 0 1 12 23l5-8a5.500 5.500 0 0 0 0-8.500z" fill="#f5c518"/><path d="M12 23A11 11 0 0 1 3.500 5L8 13a5.500 5.500 0 0 0 6 4z" fill="#3aa757"/><circle cx="12" cy="12" r="5.500" fill="#fff"/><circle cx="12" cy="12" r="4.200" fill="#4285f4"/><circle cx="19" cy="19" r="5" fill="#dde3d8"/><path d="M17 16v5h4" fill="none" stroke="#2f6b3f" stroke-width="1.600"/></svg></div>
  <div class="tb"><svg class="i24" viewBox="0 0 24 24"><path d="M12 1a11 11 0 0 1 9.500 5.500H12A5.500 5.500 0 0 0 6.800 10L3.500 5A11 11 0 0 1 12 1z" fill="#e0483e"/><path d="M21.500 6.500A11 11 0 0 1 12 23l5-8a5.500 5.500 0 0 0 0-8.500z" fill="#f5c518"/><path d="M12 23A11 11 0 0 1 3.500 5L8 13a5.500 5.500 0 0 0 6 4z" fill="#3aa757"/><circle cx="12" cy="12" r="5.500" fill="#fff"/><circle cx="12" cy="12" r="4.200" fill="#4285f4"/><circle cx="18" cy="18" r="6.500" fill="#8a8f88"/><circle cx="18" cy="16" r="2.500" fill="#d8b8a0"/><path d="M13 23c1-4 9-4 10 0z" fill="#e8e8e8"/></svg></div>
  <div class="tb tb-act"><svg class="i24" viewBox="0 0 24 24"><path d="M0 0h24v24H0z" fill="#fbeeea"/><path d="M4 21 10 5q1-2 2-2h2l6 18h-4l-1-4H9l-1 4zM10 14h4l-2-6z" fill="#b92d2f" fill-rule="evenodd"/></svg></div>
  <div class="tb"><svg class="i24" viewBox="0 0 24 24"><path d="M0 0h24v24H0z" fill="#29a8ea"/><circle cx="17" cy="6" r="2.200" fill="#e8f6ff"/><path d="M0 24V17L8 8l8 9 3-3 5 5v5z" fill="#1d4f96"/><path d="m8 8 5 6-5 10H0V17z" fill="#245fb0"/></svg></div>
  <div class="tray">
    <svg class="tr-c" viewBox="0 0 12 7"><path d="M1 6 6 1l5 5" fill="none" stroke="#e8e8e8" stroke-width="1.200"/></svg>
    <svg class="i16" viewBox="0 0 16 16"><path d="M4 1h11v9H4zM1 4h3M1 4v5h3M9 10v4M5 14h8" fill="none" stroke="#e8e8e8"/></svg>
    <svg class="i16 tr-v" viewBox="0 0 16 16"><path d="M1 5h3l4-4v14l-4-4H1z" fill="none" stroke="#e8e8e8"/><path d="M10 5c1 2 1 4 0 6M12 3c2 3 2 7 0 10" fill="none" stroke="#e8e8e8"/></svg>
    <span class="eng">ENG</span>
    <div class="clock"><div>09:53</div><div>01-08-2024</div></div>
    <div class="notif"><svg class="i16" viewBox="0 0 16 15"><path d="M0 0h16v11H6l-3 3v-3H0z" fill="#fff"/><path d="M3 3h10M3 5.500h10M3 8h7" stroke="#555"/></svg><span class="badge">1</span></div>
  </div>
</footer>
</body>
</html>
```

FILE: styles.css
```css
* { box-sizing: border-box; }
html, body { margin: 0; padding: 0; }
body {
  width: 1366px; height: 768px; overflow: hidden;
  background: #17130f;
  font-family: "Open Sans", "Noto Sans", "Liberation Sans", sans-serif;
  font-size: 11.5px; color: #e4e7ec;
  display: flex; flex-direction: column;
}
svg { display: block; flex: none; }
.defs { position: absolute; }
.i11 { width: 11px; height: 11px; }
.i13 { width: 13px; height: 13px; }
.i15 { width: 15px; height: 15px; }
.i16 { width: 16px; height: 16px; }
.i18 { width: 18px; height: 18px; }
.i24 { width: 24px; height: 24px; }
.i30 { width: 30px; height: 29px; }
.i32 { width: 32px; height: 32px; }

.wall { height: 5px; flex: none; }
.window {
  width: 1363px; height: 723px; margin-left: 2px; flex: none;
  border: 1px solid #1a8fd0; background: #222933;
  display: flex; flex-direction: column;
}

/* caret */
.car {
  display: inline-block; flex: none; width: 0; height: 0;
  border-left: 4px solid transparent; border-right: 4px solid transparent;
  border-top: 4px solid #dfe2e6;
}
.dim { border-top-color: #8d939c; }

/* head */
.head { display: flex; height: 48px; flex: none; }
.logo-col { width: 48px; flex: none; padding: 9px 0 0 11px; }
.logo { width: 26px; height: 29px; }
.head-main { flex: 1; display: flex; flex-direction: column; min-width: 0; }
.titlebar { height: 27px; display: flex; align-items: center; padding-left: 1px; flex: none; }
.qb { width: 24px; display: flex; justify-content: center; flex: none; }
.car-q { margin: 0 3px; border-width: 3px 3px 0; }
.workspace {
  width: 178px; height: 20px; margin-left: 1px; background: #3b4453;
  display: flex; align-items: center; padding-left: 3px; flex: none; margin-top: 1px;
}
.ws-t { margin-left: 3px; flex: 1; color: #dfe3e9; }
.ws-c { margin-right: 1px; }
.qa { margin-left: 6px; flex: none; }
.ws-bar { margin: 3px 0 0 7px; border-width: 4px 4px 0; position: relative; }
.ws-bar::before { content: ""; position: absolute; left: -4px; top: -8px; width: 8px; height: 2px; background: #dfe2e6; }
.doc-title { margin-left: 24px; width: 251px; flex: none; display: flex; color: #eef0f3; white-space: nowrap; }
.dwg { margin-left: 13px; }
.tri-r { width: 0; height: 0; border-left: 4px solid #dfe2e6; border-top: 4px solid transparent; border-bottom: 4px solid transparent; flex: none; margin-right: 9px; }
.search {
  width: 177px; height: 20px; flex: none; background: #4a5365; margin-top: 1px;
  font-style: italic; font-size: 11px; color: #c2c7d0; padding-left: 3px; line-height: 20px; white-space: nowrap;
}
.mag { margin-left: 7px; }
.person { margin-left: 8px; }
.signin { width: 84px; margin-left: 5px; flex: none; color: #eef0f3; }
.car-si { border-width: 3px 3px 0; }
.cart { margin-left: 13px; }
.a360 { margin-left: 8px; }
.car-a { margin-left: 7px; border-width: 3px 3px 0; }
.sep { width: 1px; height: 18px; background: #4a5260; margin-left: 8px; flex: none; }
.help {
  width: 16px; height: 16px; border-radius: 50%; background: #d8d8d8; color: #3b4453;
  font-weight: 700; font-size: 12px; line-height: 16px; text-align: center; margin-left: 9px; flex: none;
}
.car-h { margin-left: 9px; border-width: 3px 3px 0; }
.wmin { width: 9px; height: 2px; background: #e8e8e8; margin: 8px 0 0 69px; flex: none; }
.wmax { width: 13px; height: 11px; border: 1px solid #e8e8e8; margin-left: 14px; flex: none; margin-bottom: 3px; }
.wclose { width: 12px; height: 12px; margin: 0 0 4px 13px; flex: none; }

.tabs { height: 21px; display: flex; align-items: stretch; flex: none; color: #b8c1cb; letter-spacing: -.08px; }
.tab { padding: 0 10px; line-height: 21px; white-space: nowrap; flex: none; }
.tab-home { margin-right: 3px; }
.tab.active { background: #3b4453; color: #f1f3f6; border-radius: 3px 3px 0 0; margin-top: 3px; line-height: 15px; padding-top: 1px; }
.tab-last { margin-right: 21px; }
.min-tog { width: 15px; height: 7px; background: #f0f0f0; align-self: center; display: flex; justify-content: center; align-items: center; flex: none; }
.tri-u { width: 0; height: 0; border-left: 3px solid transparent; border-right: 3px solid transparent; border-bottom: 3px solid #555; }
.car-t { align-self: center; margin-left: 3px; border-width: 3px 3px 0; }

/* ribbon */
.ribbon { display: flex; gap: 1px; margin-left: 5px; height: 97px; flex: none; }
.panel { display: flex; flex-direction: column; background: #3b4453; flex: none; }
.p-named { width: 110px; }
.p-coord { width: 144px; }
.p-vp { width: 174px; }
.p-vs { width: 155px; }
.p-lights { width: 125px; }
.p-sun { width: 118px; }
.p-mat { width: 166px; }
.p-cam { width: 51px; }
.p-render { width: 300px; }
.pb { height: 81px; flex: none; display: flex; padding-top: 4px; }
.pb.col { flex-direction: column; }
.col { display: flex; flex-direction: column; }
.pt {
  height: 16px; flex: none; position: relative; background: #394250;
  display: flex; justify-content: center; align-items: center;
  line-height: 14px; color: #e4e7ec; white-space: nowrap; padding-bottom: 2px;
}
.pt:has(.corner) { padding-right: 11px; }
.car-pt { margin-left: 7px; }
.corner {
  position: absolute; right: 4px; top: 5px; width: 6px; height: 6px;
  border-right: 1.500px solid #c8ccd2; border-bottom: 1.500px solid #c8ccd2;
}
.row { height: 24px; display: flex; align-items: center; flex: none; }
.li { gap: 5px; white-space: nowrap; }
.li > span:not(.car) { margin-bottom: 2px; }
.pad-l4 { padding-left: 4px; }
.pad-l5 { padding-left: 5px; }
.pad-l6 { padding-left: 6px; }
.p-named .li { padding-left: 3px; }
.p-mat .li { letter-spacing: -.15px; }
.car-in { margin-left: 1px; border-width: 3px 3px 0; }

.dd {
  background: #4a5568; border: 1px solid #252c36; display: flex; align-items: center;
  position: relative; flex: none; white-space: nowrap; color: #eceef2;
}
.dd > span:not(.car):not(.prog) { margin-bottom: 2px; }
.car-abs { position: absolute; right: 3px; top: 7px; }
.clip { overflow: hidden; width: 72px; margin-left: 3px; }
.dd-unsaved { width: 104px; height: 21px; padding-left: 3px; }
.dd-unnamed { width: 99px; height: 21px; padding-left: 2px; gap: 1px; margin-left: 9px; }
.coord { padding-left: 7px; }
.crow { position: relative; }
.cb { width: 18px; flex: none; }
.cc { margin-left: 2px; border-width: 3px 3px 0; }
.c1 { margin-left: 12px; }
.c2 { margin-left: 10px; }
.c3 { margin-left: 7px; }
.c4 { margin-left: 6px; }

.big { display: flex; flex-direction: column; align-items: center; flex: none; }
.w36 { width: 36px; } .w40 { width: 40px; } .w58 { width: 58px; } .w60 { width: 60px; } .w100 { width: 100px; } .w102 { width: 102px; }
.ml1 { margin-left: 1px; }
.bigi { height: 38px; flex: none; }
.bigt { line-height: 15px; text-align: center; white-space: nowrap; position: relative; }
.dimt { color: #767d88; }
.vp-ic { width: 32px; height: 32px; margin-top: 3px; }
.car-big { position: absolute; border-width: 3px 3px 0; }
.cfg { right: -6px; top: 17px; }
.cl { right: -13px; top: 17px; }
.ns { right: -5px; top: 17px; }
.sky { padding-top: 8px; height: 43px; }
.sky-t { padding-bottom: 9px; }
.sky-c { position: absolute; left: 50%; bottom: 0; margin-left: -3px; border-width: 3px 3px 0; border-top-color: #767d88; }

.vs { padding-left: 4px; }
.dd-real { width: 149px; height: 21px; gap: 3px; padding-left: 2px; }
.vs2 { padding-left: 3px; }
.cv1 { margin-left: 4px; border-width: 3px 3px 0; }
.vs-b { margin-left: 9px; }
.vs-c { margin-left: 8px; }
.vs-d { margin-left: 9px; }
.vs3 { padding-left: 2px; }
.slider {
  width: 123px; height: 21px; margin-left: 8px; background: #3a4351; border: 1px solid #2e3541;
  display: flex; align-items: center; color: #6e7683;
}
.op { width: 57px; height: 19px; background: #4a5568; line-height: 19px; padding-left: 5px; }
.op-n { margin-left: 38px; padding-left: 8px; border-left: 1px solid #2e3541; height: 19px; line-height: 19px; width: 25px; }

.cam { align-items: center; }
.tea { padding-top: 3px; }
.tea-ic { width: 34px; height: 33px; }
.rs-c { position: absolute; left: 50%; top: 17px; margin-left: -3px; border-width: 3px 3px 0; }
.rcol { margin-left: -1px; padding-top: 2px; gap: 4px; width: 99px; flex: none; }
.dd-r { height: 20px; padding-left: 2px; }
.dd-prog { height: 21px; padding-left: 2px; gap: 2px; }
.prog { flex: 1; height: 19px; background: linear-gradient(#4a5568 47%, #3b4453 47%, #3b4453 53%, #4a5568 53%); }
.tea2 { padding-top: 5px; }

/* file tabs */
.filetabs { height: 27px; padding: 4px 0 0 24px; display: flex; align-items: stretch; flex: none; }
.ft { width: 123px; line-height: 25px; clip-path: polygon(0 100%, 5px 60%, 7px 0, 95% 0, 98% 60%, 100% 100%); }
.ft-start { background: #2d3440; color: #b9c0ca; padding-left: 11px; }
.ft-doc { width: 125px; background: #3b4453; color: #e8ebef; padding: 2px 14px 0 11px; display: flex; justify-content: space-between; align-items: center; }
.ft-x { width: 10px; height: 10px; }
.ft-plus { width: 20px; margin-left: 8px; height: 15px; margin-top: 4px; background: #3b4453; color: #bcc1c9; text-align: center; font-size: 15px; line-height: 15px; border-radius: 5px 5px 5px 0; }
.divider { height: 4px; flex: none; background: #3b4453; margin: 0 3px; }

/* viewport */
.viewport { height: 513px; flex: none; position: relative; }
.scene { position: absolute; left: 0; top: 0; width: 1361px; height: 513px; }
.cube-t { font: 700 9.500px "Liberation Sans", sans-serif; fill: #4a4f58; }
.un-t { font: 10px "Open Sans", sans-serif; fill: #575c68; }
.vp-label { position: absolute; left: 6px; top: 6px; line-height: 16px; color: #d6d9dd; white-space: nowrap; }
.vp-ctl { position: absolute; right: 10px; top: 10px; display: flex; align-items: center; }
.vc-min { width: 10px; height: 2px; background: #e8e8e8; margin-top: 3px; }
.vc-res { width: 11px; height: 11px; margin-left: 9px; }
.vc-x { width: 11px; height: 11px; margin-left: 13px; }
.hist { position: absolute; left: 336px; top: 429px; font: 11.600px/15px "DejaVu Sans Mono", monospace; color: #d4d4d4; }
.hist div { height: 20px; }
.hist span { display: inline-block; background: #4f4f4f; border-radius: 2px; padding: 0 2px; height: 15px; white-space: pre; }
.cmd { position: absolute; left: 274px; top: 486px; height: 27px; display: flex; }
.cmd-tools { width: 56px; background: #2b323c; display: flex; align-items: center; gap: 4px; padding-left: 5px; }
.wrench { margin-left: 6px; }
.grip { width: 5px; height: 17px; background-image: radial-gradient(circle, #d8d8d8 1px, transparent 1.2px); background-size: 2.500px 2.500px; flex: none; }
.cmd-input { width: 755px; height: 25px; margin-top: 1px; background: #fff; display: flex; align-items: center; padding-left: 4px; }
.cmd-ic { width: 16px; height: 12px; }
.cmd-car { margin-left: 2px; border-width: 4px 4px 0; border-top-color: #777; }
.cursor { width: 1px; height: 16px; background: #111; margin-left: 3px; }
.activate { position: absolute; left: 1070px; top: 468px; color: #737880; white-space: nowrap; }
.act1 { font-size: 19px; line-height: 24px; }
.act2 { font-size: 14.400px; line-height: 22px; }

/* bottom */
.bottom { height: 32px; flex: none; display: flex; border-top: 1px solid #4a5260; margin-left: 3px; padding-right: 5px; }
.ltabs { display: flex; padding-left: 11px; align-items: flex-start; flex: 1; }
.lt { height: 17px; line-height: 18px; color: #b7bec8; width: 56px; margin-right: 9px; text-align: center; flex: none; clip-path: polygon(0 0, 100% 0, 90% 100%, 10% 100%); background: #2b323e; }
.lt-on { width: 62px; background: #3b4453; color: #fff; font-weight: 700; margin-right: 1px; }
.lt-plus { width: 22px; height: 15px; background: #2d3440; color: #bcc1c9; font-size: 15px; line-height: 14px; text-align: center; border-radius: 0 0 5px 5px; }
.status { display: flex; gap: 3px; padding-top: 1px; height: 25px; flex: none; }
.sg { height: 24px; background: #3b4453; display: flex; align-items: center; flex: none; border-radius: 2px; }
.sg-model { width: 47px; justify-content: center; color: #eef0f3; font-size: 12px; letter-spacing: -.2px; }
.sg-2 { width: 64px; padding-left: 3px; gap: 4px; }
.sg-3 { width: 103px; }
.sg-4 { width: 63px; gap: 2px; }
.sg-5 { width: 106px; }
.sg-6 { width: 38px; padding-left: 4px; gap: 7px; }
.sg-s { width: 24px; justify-content: center; }
.sg-t { width: 22px; justify-content: center; }
.sg-u { width: 23px; justify-content: center; }
.sb { width: 23px; height: 24px; display: flex; justify-content: center; align-items: center; flex: none; }
.sb.on { background: #5b8fc4; }
.sb-p { margin-left: 4px; }
.sc { margin-left: 5px; border-width: 4px 4px 0; }
.sg-2 .sc { margin-left: 3px; }
.scale { margin-left: 4px; color: #e4e7ec; letter-spacing: -.5px; font-size: 12px; }
.sc-n { margin-left: 3px; border-width: 4px 4px 0; }

/* taskbar */
.taskbar { height: 40px; flex: none; background: #1c1e20; display: flex; align-items: stretch; }
.start { width: 16px; height: 16px; margin: 13px 16px 0 16px; }
.tsearch {
  width: 344px; background: #333; border: 1px solid #5c5c5c; border-bottom: 0; display: flex; align-items: center;
  gap: 12px; padding-left: 11px; font-size: 14px; color: #d2d2d2; flex: none;
}
.tb { width: 49px; display: flex; justify-content: center; align-items: center; flex: none; border-bottom: 3px solid transparent; padding-top: 3px; }
.ring { width: 15px; height: 15px; border: 2px solid #f0f0f0; border-radius: 50%; }
.tb:nth-of-type(n+11) { border-bottom-color: #76b9ed; }
.tb-act { background: #4b4b4b; width: 48px; margin-left: 1px; }
.tray { flex: 1; display: flex; align-items: center; padding-left: 112px; color: #e8e8e8; font-size: 12px; }
.tr-c { width: 12px; height: 7px; margin-right: 12px; }
.tr-v { margin-left: 8px; }
.eng { margin-left: 8px; }
.clock { margin-left: 9px; width: 68px; text-align: center; line-height: 18px; }
.notif { margin-left: 9px; position: relative; }
.badge {
  position: absolute; left: 6px; top: 7px; width: 15px; height: 15px; border-radius: 50%; border: 1px solid #bbb;
  background: #1c1e20; font-size: 10px; line-height: 13px; text-align: center; color: #ddd;
}
```
